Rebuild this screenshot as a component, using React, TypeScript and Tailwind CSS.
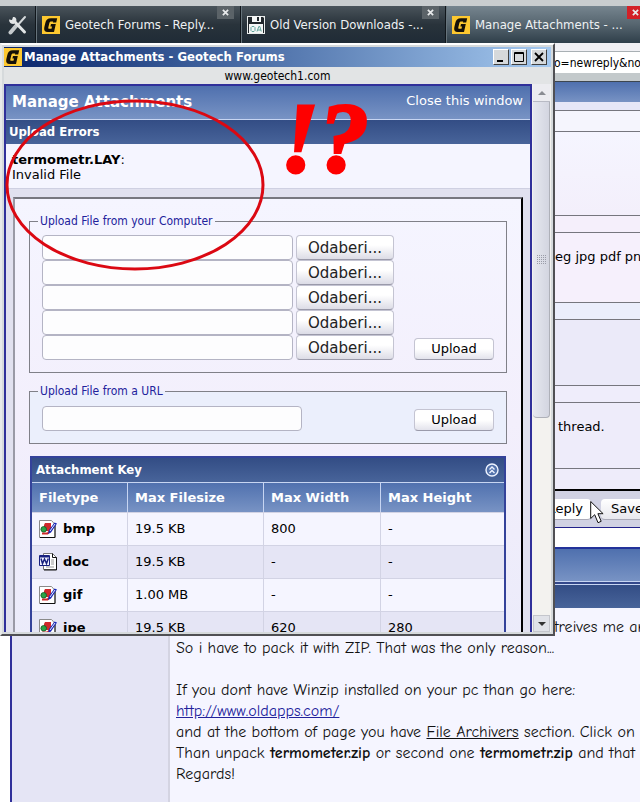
import React, { ReactElement } from 'react';

interface FileRule {
  type: string;
  size: string;
  width: string;
  height: string;
}

const RULES: FileRule[] = [
  { type: 'bmp', size: '19.5 KB', width: '800', height: '-' },
  { type: 'doc', size: '19.5 KB', width: '-', height: '-' },
  { type: 'gif', size: '1.00 MB', width: '-', height: '-' },
  { type: 'jpe', size: '19.5 KB', width: '620', height: '280' },
];

const TABS = [
  { title: 'Geotech Forums - Reply...', icon: 'g', active: false },
  { title: 'Old Version Downloads -...', icon: 'disk', active: false },
  { title: 'Manage Attachments - ...', icon: 'g', active: true },
];

function GeotechIcon(): ReactElement {
  return (
    <svg viewBox="0 0 18 18" className="h-[18px] w-[18px] shrink-0" aria-hidden="true">
      <rect width="18" height="18" fill="#fdc82f" />
      <path
        d="M14.2 6.6 15.2 2.2H9C5.500 2.2 4 3.800 3.300 7L2.300 11.300C1.700 14.400 2.800 16 5.800 16H12L13.800 8H9L8.400 10.400H10L9.500 12.800H7.300C6.400 12.800 6.100 12.300 6.300 11.400L7.300 7.200C7.600 6 8.100 5.400 9.200 5.400H11.200L10.900 6.600Z"
        fill="#151008"
      />
    </svg>
  );
}

function DiskIcon(): ReactElement {
  return (
    <svg viewBox="0 0 18 18" className="h-[18px] w-[18px] shrink-0" aria-hidden="true">
      <path d="M0 0h18v18H0z" fill="#e8ebeb" />
      <path d="M1 1h15l1 1v15H1z" fill="#20262b" />
      <path d="M5 0h9v6H5z" fill="#f4f6f6" />
      <path d="M10 1h2v4h-2z" fill="#20262b" />
      <path d="M2 8h14v9H2z" fill="#f4f6f6" />
      <path d="M5 10.500h2l1 1v3l-1 1H5l-1-1v-3zM10 15.500l1.800-5h1l1.500 5M11 14h3" fill="none" stroke="#5fa39a" />
    </svg>
  );
}

function ToolsIcon(): ReactElement {
  return (
    <svg viewBox="0 0 20 20" className="h-5 w-5" aria-hidden="true">
      <path d="M17 2 8 12" stroke="#d4d8da" strokeWidth="2" strokeLinecap="round" />
      <path d="m8 11-5.500 6.500" stroke="#c5cacd" strokeWidth="4" strokeLinecap="round" />
      <path d="m6 6 10.500 11" stroke="#e2e5e6" strokeWidth="3" strokeLinecap="round" />
      <path d="M1 4.500 4 5l1-3C8 2 9 4 8 7L5.500 9C3 9 1 7.500 1 4.500z" fill="#e2e5e6" />
    </svg>
  );
}

function PictureIcon(): ReactElement {
  return (
    <svg viewBox="0 0 18 18" className="h-[18px] w-[18px] shrink-0" aria-hidden="true">
      <path d="M.5.5h12l3.500 4v13H.5z" fill="#fff" stroke="#8a8a8a" />
      <path d="M16 5v12.500H1" fill="none" stroke="#111" />
      <path d="M6 3h6v8H5V5z" fill="#cf2a2c" />
      <path d="M3 13.500h5.500L12 10" fill="none" stroke="#cf2a2c" strokeWidth="2" />
      <circle cx="4.700" cy="9.300" r="2.800" fill="#2aa447" stroke="#0d5a22" strokeWidth=".8" />
      <path d="m9 14 1-4 5.500-7.500 2.500 1-6 9z" fill="#1b2ab8" />
      <path d="m11 11 5-7" stroke="#e8ecff" />
    </svg>
  );
}

function WordIcon(): ReactElement {
  return (
    <svg viewBox="0 0 18 18" className="h-[18px] w-[18px] shrink-0" aria-hidden="true">
      <path d="M4.500.5h9l4 4v12h-13z" fill="#fff" stroke="#777" />
      <path d="M13.500.5v4h4v12.500H5" fill="none" stroke="#111" />
      <path d="M12 7h3M12 9h3M12 11h3M7 14h8" stroke="#999" />
      <path d="M.5 2.500h10v10H.5z" fill="#f2f3ff" stroke="#17207f" />
      <path d="M1 3h9v1.500H1z" fill="#17207f" />
      <path d="m2 5.500 1.500 5L5.500 6l2 4.500 1.800-5" fill="none" stroke="#17207f" strokeWidth="1.500" />
    </svg>
  );
}

function CollapseIcon(): ReactElement {
  return (
    <svg viewBox="0 0 14 14" className="h-[14px] w-[14px]" fill="none" stroke="#eef3ff" aria-hidden="true">
      <circle cx="7" cy="7" r="6" fill="#5473ac" strokeWidth="1.400" />
      <path d="M4.500 6.500 7 4l2.500 2.500M4.500 10 7 7.500 9.500 10" strokeWidth="1.400" />
    </svg>
  );
}

function TabBar(): ReactElement {
  return (
    <nav
      aria-label="Tabs"
      className="flex h-[43px] border-t-[6px] border-[#c9cdcf] bg-linear-to-b from-[#4a545b] via-[#29333b] to-[#1f2b36]"
    >
      <button type="button" aria-label="Tools" className="flex w-9 shrink-0 items-center justify-center border-r border-[#10161b]">
        <ToolsIcon />
      </button>
      {TABS.map((tab) => (
        <div
          key={tab.title}
          className={`${
            tab.active ? 'bg-linear-to-b from-[#76858f] via-[#56656f] to-[#2f3f4a]' : ''
          } flex w-[205px] shrink-0 items-start border-r border-l border-r-[#10161b] border-l-[#66737b] pl-[5px]`}
        >
          <button type="button" className="flex h-full min-w-0 flex-1 items-center gap-[5px] text-left text-[13px] whitespace-nowrap text-[#eef1f3]">
            {tab.icon === 'g' ? <GeotechIcon /> : <DiskIcon />}
            <span>{tab.title}</span>
          </button>
          <button
            type="button"
            aria-label={`Close ${tab.title}`}
            className={`${tab.active ? 'bg-[#d32027]' : 'bg-[#5b6368]'} -ml-6 mr-[6px] flex h-[13px] w-[17px] shrink-0 items-center justify-center`}
          >
            <svg viewBox="0 0 8 8" className="h-[7px] w-[7px]" stroke="#e8eaeb" strokeWidth="2" aria-hidden="true">
              <path d="m1 1 6 6M7 1 1 7" />
            </svg>
          </button>
        </div>
      ))}
    </nav>
  );
}

function ForumPage(): ReactElement {
  return (
    <main className="flex flex-1 flex-col bg-white">
      <div className="border-b border-[#3c4650] bg-[#c3c9cb] pb-2">
        <div className="h-2 bg-[#f0f0f4]" />
        <div className="h-[22px] border-t border-[#a9b0b4] bg-white pl-[554px] text-xs leading-[22px] whitespace-nowrap">
          o=newreply&amp;no
        </div>
      </div>
      <div className="h-5 bg-linear-to-b from-[#4f70ae] to-[#7893c4]" />
      <div className="flex flex-col bg-[#eeecfa]">
        <div className="h-2 bg-[#e6e7f8]" />
        <div className="h-[22px] border-y border-[#76767e] bg-[#f5f5fd]" />
        <div className="h-[83px] bg-linear-to-b from-[#f5f5ff] to-[#f3effb]" />
        <div className="h-[18px] border-y border-[#76767e] bg-[#f5effb]" />
        <div className="h-[69px] bg-[#f6f0fc] pt-[14px] pl-[555px] font-['DejaVu_Sans',sans-serif] text-[13px] leading-5 whitespace-nowrap">
          eg jpg pdf pn
        </div>
        <div className="h-[18px] border-y border-[#76767e] bg-[#ebeefc]" />
        <div className="h-[65px] bg-[#ebeaf9]" />
        <div className="h-[18px] border-y border-[#76767e] bg-[#efedfb]" />
        <div className="h-[65px] pt-[14px] pl-[558px] font-['DejaVu_Sans',sans-serif] text-[13px] leading-5">thread.</div>
        <div className="h-[21px] border-t border-[#76767e]" />
      </div>
      <div className="flex h-[39px] gap-[10px] border-t-2 border-b border-t-black border-b-[#22228a] bg-[#d1d2e3] pt-2 pl-[511px] font-['DejaVu_Sans',sans-serif] text-[13px]">
        <button type="button" className="h-[21px] w-20 shrink-0 rounded-sm border-b border-[#aaaab8] bg-white pr-2 text-right">
          Reply
        </button>
        <button type="button" className="h-[21px] w-20 shrink-0 rounded-sm border-b border-[#aaaab8] bg-linear-to-b from-white to-[#e8e8ee] pl-[10px] text-left">
          Save
        </button>
      </div>
      <div className="h-[21px] border-b-2 border-[#22329a]" />
      <div className="h-[32px] bg-linear-to-b from-[#4f70ae] to-[#7893c4]" />
      <div className="h-1 border-y border-[#c7d5f2] bg-[#33488b]" />
      <div className="h-[23px] bg-linear-to-b from-[#334d85] to-[#48649a]" />
      <div className="ml-[10px] flex flex-1 border-l-2 border-[#30309a]">
        <aside className="w-[158px] shrink-0 border-r-2 border-[#d4d4e2] bg-[#e5e5f5]" />
        <article className="min-w-0 flex-1 bg-[#f5f5ff] pt-[9px] pl-[6px] font-['Comic_Sans_MS','Comic_Neue','DejaVu_Sans_Condensed',sans-serif] text-base leading-[21px] whitespace-nowrap text-[#111]">
          <p className="pl-[378px]">treives me an</p>
          <p>So i have to pack it with ZIP. That was the only reason...</p>
          <br />
          <p>If you dont have Winzip installed on your pc than go here:</p>
          <p>
            <a href="http://www.oldapps.com/" className="text-[#22229c] underline">
              http://www.oldapps.com/
            </a>
          </p>
          <p>
            and at the bottom of page you have <u>File Archivers</u> section. Click on
          </p>
          <p>
            Than unpack <b>termometer.zip</b> or second one <b>termometr.zip</b> and that
          </p>
          <p>Regards!</p>
        </article>
      </div>
    </main>
  );
}

const frameButton =
  'flex h-4 w-4 items-center justify-center border border-t-white border-l-white border-r-[#404040] border-b-[#404040] bg-[#d6d9db]';

function TitleBar(): ReactElement {
  return (
    <header className="flex h-5 items-center bg-linear-to-r from-[#0a246a] to-[#a6caf0] pr-1">
      <GeotechIcon />
      <h1 className="flex-1 pl-[2px] text-[13px] font-bold whitespace-nowrap text-white">Manage Attachments - Geotech Forums</h1>
      <button type="button" aria-label="Minimize" className={frameButton}>
        <svg viewBox="0 0 10 10" className="h-[10px] w-[10px]" aria-hidden="true">
          <path d="M1 8h6v2H1z" />
        </svg>
      </button>
      <button type="button" aria-label="Maximize" className={`${frameButton} ml-[2px]`}>
        <svg viewBox="0 0 10 10" className="h-[10px] w-[10px]" fill="none" stroke="#000" aria-hidden="true">
          <path d="M.5.5h9v9h-9zM.5 1.500h9" />
        </svg>
      </button>
      <button type="button" aria-label="Close" className={`${frameButton} ml-1`}>
        <svg viewBox="0 0 10 10" className="h-[10px] w-[10px]" stroke="#000" strokeWidth="1.800" aria-hidden="true">
          <path d="m1 1 8 8M9 1 1 9" />
        </svg>
      </button>
    </header>
  );
}

function Scrollbar(): ReactElement {
  return (
    <div className="flex w-[19px] shrink-0 flex-col bg-[#f3f2ef] px-px">
      <button type="button" aria-label="Scroll up" className="flex h-[18px] items-center justify-center border-b border-[#b8bac4] bg-[#ececf0]">
        <svg viewBox="0 0 8 4" className="h-1 w-2" fill="#8a8c92" aria-hidden="true">
          <path d="M4 0 8 4H0z" />
        </svg>
      </button>
      <div className="flex h-[316px] items-center justify-center rounded-b-sm border-r border-b border-[#aeb0b8] bg-linear-to-r from-[#e6e8ef] to-[#d3d5e0]">
        <svg viewBox="0 0 9 9" className="h-[9px] w-[9px]" stroke="#9a9ca8" strokeDasharray="1 1" aria-hidden="true">
          <path d="M0 .5h9M0 2.500h9M0 4.500h9M0 6.500h9M0 8.500h9" />
        </svg>
      </div>
      <button type="button" aria-label="Scroll down" className="mt-auto flex h-[17px] items-center justify-center border border-[#c4c6cc] bg-[#e0e2e8]">
        <svg viewBox="0 0 8 4" className="h-1 w-2" fill="#333" aria-hidden="true">
          <path d="M0 0h8L4 4z" />
        </svg>
      </button>
    </div>
  );
}

const textBox = 'h-[25px] rounded-sm border border-[#b4b4c4] bg-[#fdfdfe] px-1 text-[13px]';
const uploadButton =
  "h-[22px] w-20 rounded-sm border border-[#c4c4d2] border-b-[#9a9aaa] bg-linear-to-b from-white from-50% to-[#e3e3ec] font-['DejaVu_Sans',sans-serif] text-[13px] leading-5";

function UploadForm(): ReactElement {
  return (
    <form className="flex flex-col gap-[10px]">
      <fieldset className="border border-[#808088] px-3 pt-[6px] pb-3">
        <legend className="-ml-1 px-[2px] text-xs leading-4 text-[#22229c]">Upload File from your Computer</legend>
        <div className="flex items-end">
          <div className="flex-1">
            {[1, 2, 3, 4, 5].map((n) => (
              <div key={n} className="flex gap-[3px]">
                <input type="text" aria-label={`File ${n}`} className={`${textBox} w-[251px]`} />
                <button
                  type="button"
                  className="h-[25px] w-[98px] rounded-sm border border-[#c4c4d2] border-b-[#9a9aaa] bg-linear-to-b from-white from-40% to-[#dcdce6] font-['DejaVu_Sans',sans-serif] text-[15px] leading-[22px] text-[#222]"
                >
                  Odaberi...
                </button>
              </div>
            ))}
          </div>
          <button type="submit" className={uploadButton}>
            Upload
          </button>
        </div>
      </fieldset>
      <fieldset className="border border-[#808088] bg-[#ebeffc] px-3 pt-[7px] pb-3">
        <legend className="-ml-1 px-[2px] text-xs leading-4 text-[#22229c]">Upload File from a URL</legend>
        <div className="flex items-end justify-between">
          <input type="text" aria-label="File URL" className={`${textBox} w-[260px]`} />
          <button type="submit" className={uploadButton}>
            Upload
          </button>
        </div>
      </fieldset>
    </form>
  );
}

function AttachmentKey(): ReactElement {
  const head = 'border-t border-l border-[#c7d5f2] px-[7px] text-left first:border-l-0';
  const cell = 'border-t border-l border-[#d2d3e4] px-[7px] first:border-l-0';

  return (
    <section className="mt-3 mr-px ml-px border-2 border-[#34429a] bg-[#f5f5ff]">
      <div className="flex h-6 items-center justify-between bg-linear-to-b from-[#334d85] to-[#48649a] pr-[5px] pl-1 text-[13px] font-bold text-white">
        <h2>Attachment Key</h2>
        <button type="button" aria-label="Collapse">
          <CollapseIcon />
        </button>
      </div>
      <table className="w-full table-fixed border-separate border-spacing-0 font-['DejaVu_Sans',sans-serif] text-[13px]">
        <thead>
          <tr className="h-[30px] bg-linear-to-b from-[#4f70ae] to-[#7893c4] text-white">
            <th scope="col" className={`${head} w-[95px]`}>Filetype</th>
            <th scope="col" className={`${head} w-[136px]`}>Max Filesize</th>
            <th scope="col" className={`${head} w-[117px]`}>Max Width</th>
            <th scope="col" className={head}>Max Height</th>
          </tr>
        </thead>
        <tbody>
          {RULES.map((rule) => (
            <tr key={rule.type} className="h-[33px] even:bg-[#e5e5f5]">
              <td className={cell}>
                <div className="flex items-center gap-[6px] font-bold">
                  {rule.type === 'doc' ? <WordIcon /> : <PictureIcon />}
                  {rule.type}
                </div>
              </td>
              <td className={cell}>{rule.size}</td>
              <td className={cell}>{rule.width}</td>
              <td className={cell}>{rule.height}</td>
            </tr>
          ))}
        </tbody>
      </table>
    </section>
  );
}

function AttachmentWindow(): ReactElement {
  return (
    <section className="absolute top-[43px] left-0 flex h-[593px] w-[555px] flex-col border-2 border-t-white border-r-[#505054] border-b-[#505054] border-l-[#e8eaea] bg-[#d6dadc] p-[2px]">
      <TitleBar />
      <div className="h-[17px] bg-[#e2e4e5] text-center text-xs leading-[18px]">www.geotech1.com</div>
      <div className="flex min-h-0 flex-1">
        <div className="min-w-0 flex-1 overflow-hidden border-2 border-b-0 border-[#30309a] bg-[#e1e1ef]">
          <div className="flex h-[34px] items-center justify-between border-b border-[#c7d5f2] bg-linear-to-b from-[#4f70ae] to-[#7893c4] pr-[7px] pl-[6px] font-['DejaVu_Sans',sans-serif] text-white">
            <h2 className="text-[15px] font-bold">Manage Attachments</h2>
            <a href="#close" className="pb-1 text-[13px]">
              Close this window
            </a>
          </div>
          <h3 className="h-6 bg-linear-to-b from-[#334d85] to-[#48649a] pl-[3px] text-[13px] leading-6 font-bold text-white">Upload Errors</h3>
          <div className="h-[45px] border-b border-[#cfd0e2] bg-[#f5f5ff] pt-2 pl-[6px] font-['DejaVu_Sans',sans-serif] text-[13px] leading-[15px]">
            <b>termometr.LAY</b>:
            <br />
            Invalid File
          </div>
          <div className="mx-[7px] mt-2 border-2 border-b-0 border-t-[#77777f] border-r-black border-l-[#9a9aa6] bg-linear-to-b from-[#f5f5ff] via-[#f3effc] to-[#ebebfa] px-[14px] pt-[14px]">
            <UploadForm />
            <AttachmentKey />
          </div>
        </div>
        <Scrollbar />
      </div>
    </section>
  );
}

function Annotations(): ReactElement {
  return (
    <>
      <svg viewBox="0 0 262 174" className="pointer-events-none absolute top-[98px] left-[4px] h-[174px] w-[262px]" aria-hidden="true">
        <ellipse cx="131" cy="87" rx="128" ry="84" fill="none" stroke="#db0812" strokeWidth="3" />
      </svg>
      <strong className="pointer-events-none absolute top-[96px] left-[280px] text-[100px] leading-[84px] font-bold text-[#fe0000] italic [-webkit-text-stroke:3px_#fe0000] [font-family:'Liberation_Serif',serif]">
        !?
      </strong>
      <svg viewBox="0 0 14 24" className="pointer-events-none absolute top-[500px] left-[590px] h-6 w-[14px]" aria-hidden="true">
        <path d="M.7 1.500v17l4-3.800 3.300 8 3.200-1.400-3.300-7.600h5.200z" fill="#fff" stroke="#111" />
      </svg>
    </>
  );
}

export default function App(): ReactElement {
  return (
    <div className="relative flex min-h-screen flex-col overflow-hidden font-['DejaVu_Sans_Condensed','Noto_Sans',sans-serif] text-black">
      <TabBar />
      <ForumPage />
      <AttachmentWindow />
      <Annotations />
    </div>
  );
}
